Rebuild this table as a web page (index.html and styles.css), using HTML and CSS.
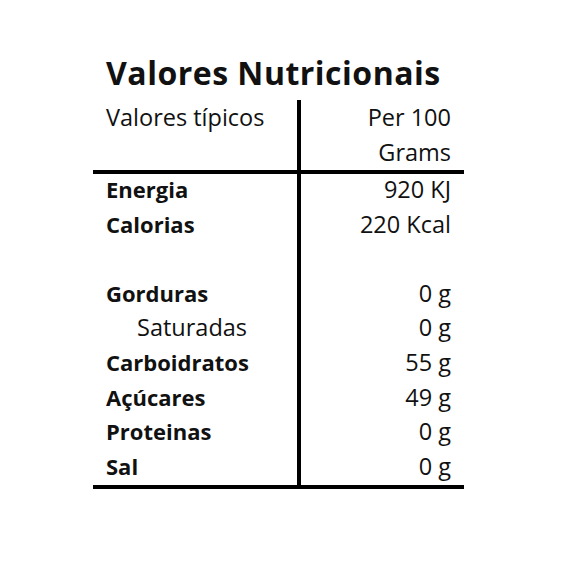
FILE: index.html
```html
<!DOCTYPE html>
<html lang="pt">
<head>
<meta charset="utf-8">
<title>Valores Nutricionais</title>
<link rel="stylesheet" href="styles.css">
</head>
<body>
<div class="label">
  <h1 class="title">Valores Nutricionais</h1>
  <div class="section head">
    <div class="col left">
      <div class="row">Valores típicos</div>
      <div class="row"></div>
    </div>
    <div class="col right">
      <div class="row">Per 100</div>
      <div class="row">Grams</div>
    </div>
  </div>
  <div class="section body">
    <div class="col left">
      <div class="row b">Energia</div>
      <div class="row b">Calorias</div>
      <div class="row"></div>
      <div class="row b">Gorduras</div>
      <div class="row sub">Saturadas</div>
      <div class="row b">Carboidratos</div>
      <div class="row b">Açúcares</div>
      <div class="row b">Proteinas</div>
      <div class="row b">Sal</div>
    </div>
    <div class="col right">
      <div class="row">920 KJ</div>
      <div class="row">220 Kcal</div>
      <div class="row"></div>
      <div class="row">0 g</div>
      <div class="row">0 g</div>
      <div class="row">55 g</div>
      <div class="row">49 g</div>
      <div class="row">0 g</div>
      <div class="row">0 g</div>
    </div>
  </div>
</div>
</body>
</html>
```
FILE: styles.css
```css
html, body {
  margin: 0;
  padding: 0;
  background: #ffffff;
}
body {
  font-family: "Open Sans", "Liberation Sans", sans-serif;
  color: #111111;
}
.label {
  width: 371px;
  margin-left: 93px;
  padding-top: 52px;
}
.title {
  margin: 0;
  padding-left: 13px;
  font-size: 32px;
  font-weight: 700;
  line-height: 42px;
  height: 48px;
  letter-spacing: 0.5px;
}
.section {
  display: grid;
  grid-template-columns: 208px 1fr;
  border-bottom: 4px solid #000;
}
.col.left {
  border-right: 4px solid #000;
  padding-left: 13px;
}
.col.right {
  padding-right: 13px;
  text-align: right;
}
.row {
  height: 35px;
  line-height: 35px;
  font-size: 23.5px;
  white-space: nowrap;
}
.body .row {
  height: 34.6px;
  line-height: 31px;
}
.row.b {
  font-size: 22px;
  font-weight: 700;
}
.row.sub {
  padding-left: 31px;
}
```
